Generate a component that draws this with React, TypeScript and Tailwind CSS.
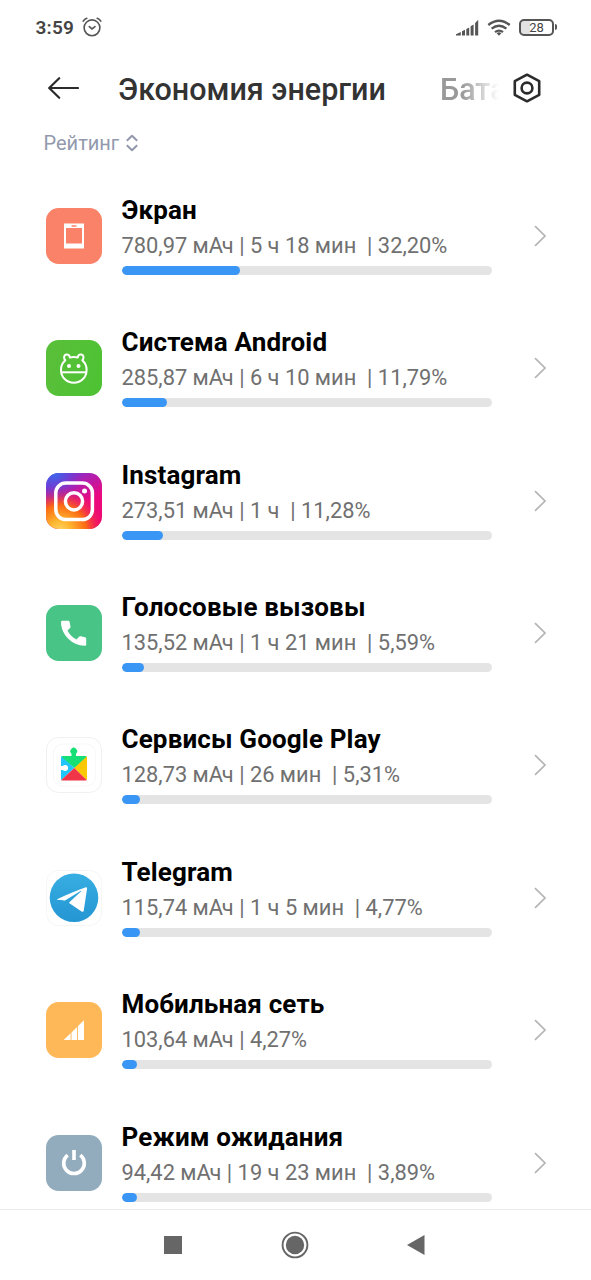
import type { ReactNode } from 'react'

type Usage = {
  name: string
  details: string
  bar: number
  icon: ReactNode
}

function ScreenIcon() {
  return (
    <svg viewBox="0 0 56 56" className="size-14">
      <rect width="56" height="56" rx="12.500" fill="#fa8268" />
      <path fillRule="evenodd" fill="#fff" d="M18 15.500h20v25H18zM20 20v15.500h16V20zM25.500 17.200v1.600h5v-1.600z" />
    </svg>
  )
}

function AndroidIcon() {
  return (
    <svg viewBox="0 0 56 56" className="size-14" fill="none">
      <defs>
        <linearGradient id="android" x1="0" y1="0" x2="1" y2="0.3">
          <stop offset="0" stopColor="#5abf3a" />
          <stop offset="1" stopColor="#4fc234" />
        </linearGradient>
      </defs>
      <rect width="56" height="56" rx="12.500" fill="url(#android)" />
      <g stroke="#fff" strokeWidth="2" strokeLinejoin="round">
        <path d="M19.300 20.300c-2-2-1.500-5.200.9-5.800 2-.4 3.400.9 3.600 3 2.600-.8 5.400-.8 8 0 .2-2.100 1.600-3.400 3.600-3 2.400.6 2.900 3.800.9 5.800 3 2.700 4.300 6 4.300 9.400 0 7.600-5.500 13-12.800 13S15 37.300 15 29.700c0-3.400 1.300-6.700 4.300-9.400z" />
        <path d="M15.300 32.300h25.200" />
      </g>
      <circle cx="23" cy="25.900" r="2" fill="#fff" />
      <circle cx="32.500" cy="25.900" r="2" fill="#fff" />
    </svg>
  )
}

function InstagramIcon() {
  return (
    <svg viewBox="0 0 56 56" className="size-14" fill="none">
      <defs>
        <linearGradient id="ig-base" x1="0.25" y1="0" x2="0.8" y2="1">
          <stop offset="0" stopColor="#6a3adb" />
          <stop offset="0.28" stopColor="#b01fae" />
          <stop offset="0.6" stopColor="#ea0a80" />
          <stop offset="1" stopColor="#ee0873" />
        </linearGradient>
        <radialGradient id="ig-warm" cx="0.25" cy="1.05" r="0.82">
          <stop offset="0" stopColor="#ffd86a" />
          <stop offset="0.25" stopColor="#ffb52e" />
          <stop offset="0.58" stopColor="#fb6a14" />
          <stop offset="1" stopColor="#f00a66" stopOpacity="0" />
        </radialGradient>
        <radialGradient id="ig-blue" cx="0.15" cy="0" r="0.5">
          <stop offset="0" stopColor="#3a6bea" />
          <stop offset="1" stopColor="#6a3adb" stopOpacity="0" />
        </radialGradient>
      </defs>
      <rect width="56" height="56" rx="12.500" fill="url(#ig-base)" />
      <rect width="56" height="56" rx="12.500" fill="url(#ig-warm)" />
      <rect width="56" height="56" rx="12.500" fill="url(#ig-blue)" />
      <rect x="9.800" y="10" width="36.600" height="36.600" rx="10" stroke="#fff" strokeWidth="3.500" />
      <circle cx="28" cy="28.300" r="8.600" stroke="#fff" strokeWidth="3.500" />
      <circle cx="38.500" cy="18" r="2.500" fill="#fff" />
    </svg>
  )
}

function CallIcon() {
  return (
    <svg viewBox="0 0 56 56" className="size-14">
      <rect width="56" height="56" rx="12.500" fill="#48c586" />
      <path
        fill="#fff"
        d="M16.500 15.800h5.700c.8 0 1.200.4 1.400 1.200l.9 4.400c.1.700 0 1.100-.5 1.600l-2.500 2.500c2 4 4.900 6.900 8.900 8.900l2.700-2.600c.5-.5 1-.6 1.600-.5l4.300.9c.8.200 1.200.6 1.200 1.400v5.600c0 1-.5 1.500-1.500 1.500C26 40.700 15 29.500 15 17.300c0-1 .5-1.500 1.500-1.500z"
      />
    </svg>
  )
}

function PlayServicesIcon() {
  return (
    <svg viewBox="0 0 56 56" className="size-14">
      <rect x="0.500" y="0.500" width="55" height="55" rx="12" fill="#fff" stroke="#f0f0f0" />
      <rect x="7.500" y="7" width="42" height="42" rx="9" fill="none" stroke="#f8f8f8" />
      <path fill="#16df76" d="M15 20.500q0-1.500 1.500-1.500h9v-2.200a3.400 3.400 0 1 1 4.500 0V19h9.500q1.500 0 1.500 1.500L28.500 31z" />
      <path fill="#20c5fb" d="M15.300 19.400 28.300 31 15.300 43q-.3-.3-.3-1V20.500q0-.8.300-1.100z" />
      <path fill="#fbc806" d="M40.700 19.400 28.300 31l12.400 12q.3-.4.3-1V20.500q0-.8-.3-1.100z" />
      <path fill="#ef3547" d="M28.300 31 15.300 43q.5.500 1.200.5h23q.7 0 1.200-.5z" />
      <path fill="#fff" d="M14.500 29h2.300c.6-.7 1.400-1.100 2.300-1.100a3.100 3.100 0 1 1-2.300 5.200h-2.300z" />
    </svg>
  )
}

function TelegramIcon() {
  return (
    <svg viewBox="0 0 56 56" className="size-14">
      <defs>
        <linearGradient id="telegram" x1="0" y1="0" x2="0" y2="1">
          <stop offset="0" stopColor="#37aee2" />
          <stop offset="1" stopColor="#2496d3" />
        </linearGradient>
      </defs>
      <rect x="0.500" y="0.500" width="55" height="55" rx="12" fill="#fff" stroke="#f6f6f6" />
      <circle cx="28" cy="27.800" r="24.300" fill="url(#telegram)" />
      <path
        fill="#fff"
        d="M11.600 28.900c9.400-4.400 18.800-8.600 27.600-11.500 1.400-.4 2 .2 1.800 1.600l-3.200 21.300c-.3 1.600-1.200 1.900-2.600 1l-11.400-7.700c-.7-.5-.7-1-.2-1.600l11.600-10.700c.5-.6 0-.8-.7-.4l-14.700 9.100c-.9.600-1.700.6-2.700.3l-5.500-.6c-.8-.2-.8-.5 0-.8z"
      />
    </svg>
  )
}

function NetworkIcon() {
  return (
    <svg viewBox="0 0 56 56" className="size-14">
      <rect width="56" height="56" rx="12.500" fill="#ffb857" />
      <path fill="#fff" d="M17.700 38l6.900-6.700V38zM25.500 30.400l5.600-5.400v13h-5.600zM32 24.100l6-5.900V38h-6z" />
    </svg>
  )
}

function StandbyIcon() {
  return (
    <svg viewBox="0 0 56 56" className="size-14" fill="none" stroke="#fff" strokeWidth="3.600">
      <rect width="56" height="56" rx="12.500" fill="#92acbd" stroke="none" />
      <path d="M21.700 20.100a10.300 10.300 0 1 0 12.600 0M28 15v10" />
    </svg>
  )
}

const items: Usage[] = [
  { name: 'Экран', details: '780,97 мАч | 5 ч 18 мин  | 32,20%', bar: 118.5, icon: <ScreenIcon /> },
  { name: 'Система Android', details: '285,87 мАч | 6 ч 10 мин  | 11,79%', bar: 45, icon: <AndroidIcon /> },
  { name: 'Instagram', details: '273,51 мАч | 1 ч  | 11,28%', bar: 41, icon: <InstagramIcon /> },
  { name: 'Голосовые вызовы', details: '135,52 мАч | 1 ч 21 мин  | 5,59%', bar: 22.5, icon: <CallIcon /> },
  { name: 'Сервисы Google Play', details: '128,73 мАч | 26 мин  | 5,31%', bar: 18.5, icon: <PlayServicesIcon /> },
  { name: 'Telegram', details: '115,74 мАч | 1 ч 5 мин  | 4,77%', bar: 18.5, icon: <TelegramIcon /> },
  { name: 'Мобильная сеть', details: '103,64 мАч | 4,27%', bar: 15.5, icon: <NetworkIcon /> },
  { name: 'Режим ожидания', details: '94,42 мАч | 19 ч 23 мин  | 3,89%', bar: 15.5, icon: <StandbyIcon /> },
]

function StatusBar() {
  return (
    <div className="flex h-[54px] shrink-0 items-center pl-[35.500px] pr-[34px] text-[#444]">
      <span className="text-[19px] font-semibold leading-none tracking-[0.2px]">3:59</span>
      <svg width="20" height="20" viewBox="0 0 20 20" fill="none" stroke="#555" strokeWidth="1.600" strokeLinecap="round" className="ml-2">
        <circle cx="10" cy="10.800" r="7.900" />
        <path d="M7.300 9.600l2.700 2.300 3-2.300M1.200 4.200Q2.500 2 4.800 1.300M18.800 4.200Q17.500 2 15.200 1.300" />
      </svg>
      <div className="ml-auto flex items-center">
        <svg width="23" height="17" viewBox="0 0 23 17" fill="#555">
          <path d="M0 16.500v-1.200l4.800-2.300v3.500zM6 12.300l3-1.600v5.800H6zM10.300 10l2.900-1.600v8.100h-2.900zM14.600 7.300l3-1.700v10.900h-3zM19.100 4L22.200.8v15.700h-3.100z" />
        </svg>
        <svg width="24" height="17" viewBox="0 0 24 17" fill="none" stroke="#555" strokeWidth="2.300" className="ml-2">
          <path d="M1.300 6q10.700-8.600 21.400 0M4.600 9.700q7.400-6 14.800 0M8 13.200q4-3.200 8 0" />
          <path d="M9.600 14.200q2.400-1.700 4.800 0L12 16.800z" fill="#555" stroke="none" />
        </svg>
        <div className="ml-2 flex h-[17px] w-[35px] items-center justify-center rounded-[5px] border-2 border-[#555] bg-linear-to-r from-[#e2e2e2] from-28% to-white to-28% text-[13px] leading-none">
          28
        </div>
        <div className="ml-px h-[6px] w-[2px] rounded-r-sm bg-[#555]" />
      </div>
    </div>
  )
}

function Header() {
  return (
    <header className="flex h-[66px] shrink-0 items-center pl-12 pt-[2px]">
      <svg width="31" height="22" viewBox="0 0 31 22" fill="none" stroke="#2b2b2b" strokeWidth="2.200" strokeLinecap="round" strokeLinejoin="round">
        <path d="M11.200 1.200L1.200 11l10 9.800M1.500 11H30" />
      </svg>
      <h1 className="ml-[39px] w-[322px] shrink-0 whitespace-nowrap pt-[3px] text-[30.500px] font-medium leading-9 text-[#333]">Экономия энергии</h1>
      <div className="w-[62px] shrink-0 overflow-hidden whitespace-nowrap pt-[3px] text-[30.500px] font-medium leading-9 text-[#999] mask-r-from-35% mask-r-to-95%">
        Батарея
      </div>
      <svg width="30" height="30" viewBox="0 0 30 30" fill="none" stroke="#2b2b2b" strokeLinejoin="round" className="ml-[10px]">
        <path strokeWidth="2.600" d="M15 1.700l12.200 6.500v13.600L15 28.300 2.800 21.800V8.200z" />
        <circle cx="15" cy="15" r="5.400" strokeWidth="2.600" />
      </svg>
    </header>
  )
}

function Row({ name, details, bar, icon }: Usage) {
  return (
    <li className="flex h-[132.400px] shrink-0 items-center">
      {icon}
      <div className="ml-[19.500px] w-[370.500px] pb-[2px]">
        <h2 className="whitespace-nowrap text-[26px] font-bold leading-[30px] tracking-[0.150px] text-black">{name}</h2>
        <p className="mt-[7px] whitespace-pre text-[21.850px] leading-7 text-[#707070]">{details}</p>
        <div className="mt-[6px] h-[9px] overflow-hidden rounded-full bg-[#e4e4e4]">
          <div className="h-full rounded-full bg-[#3a96f5]" style={{ width: bar }} />
        </div>
      </div>
      <svg width="12" height="22" viewBox="0 0 12 22" fill="none" stroke="#b5b5b5" strokeWidth="1.700" className="ml-[41.500px]">
        <path d="M1 1.200l10 9.800L1 20.800" />
      </svg>
    </li>
  )
}

export default function App() {
  return (
    <div className="flex h-[1280px] w-[591px] flex-col overflow-hidden bg-white font-[Roboto,sans-serif]">
      <StatusBar />
      <Header />
      <div className="flex h-[49.700px] shrink-0 items-start pl-[43.500px] pt-[11px] text-[#9299ad]">
        <span className="text-[20px] leading-6">Рейтинг</span>
        <svg width="12" height="18" viewBox="0 0 12 18" fill="none" stroke="currentColor" strokeWidth="2" strokeLinejoin="round" className="ml-[7px] mt-[3px]">
          <path d="M.8 6.800L6 1.700l5.200 5.100M.8 11.200L6 16.300l5.200-5.100" />
        </svg>
      </div>
      <ul className="min-h-0 flex-1 overflow-hidden pl-[46px]">
        {items.map((item) => (
          <Row key={item.name} {...item} />
        ))}
      </ul>
      <nav className="flex h-[71px] shrink-0 items-center border-t border-[#ececec] pl-[164px] text-[#666]">
        <div className="size-[18px] bg-[#666]" />
        <svg width="28" height="28" viewBox="0 0 28 28" className="ml-[99px]">
          <circle cx="14" cy="14" r="12.400" fill="none" stroke="currentColor" strokeWidth="1.900" />
          <circle cx="14" cy="14" r="9.200" fill="currentColor" />
        </svg>
        <svg width="18" height="20" viewBox="0 0 18 20" fill="currentColor" className="ml-[98px]">
          <path d="M17.500 0v20L0 10z" />
        </svg>
      </nav>
    </div>
  )
}
